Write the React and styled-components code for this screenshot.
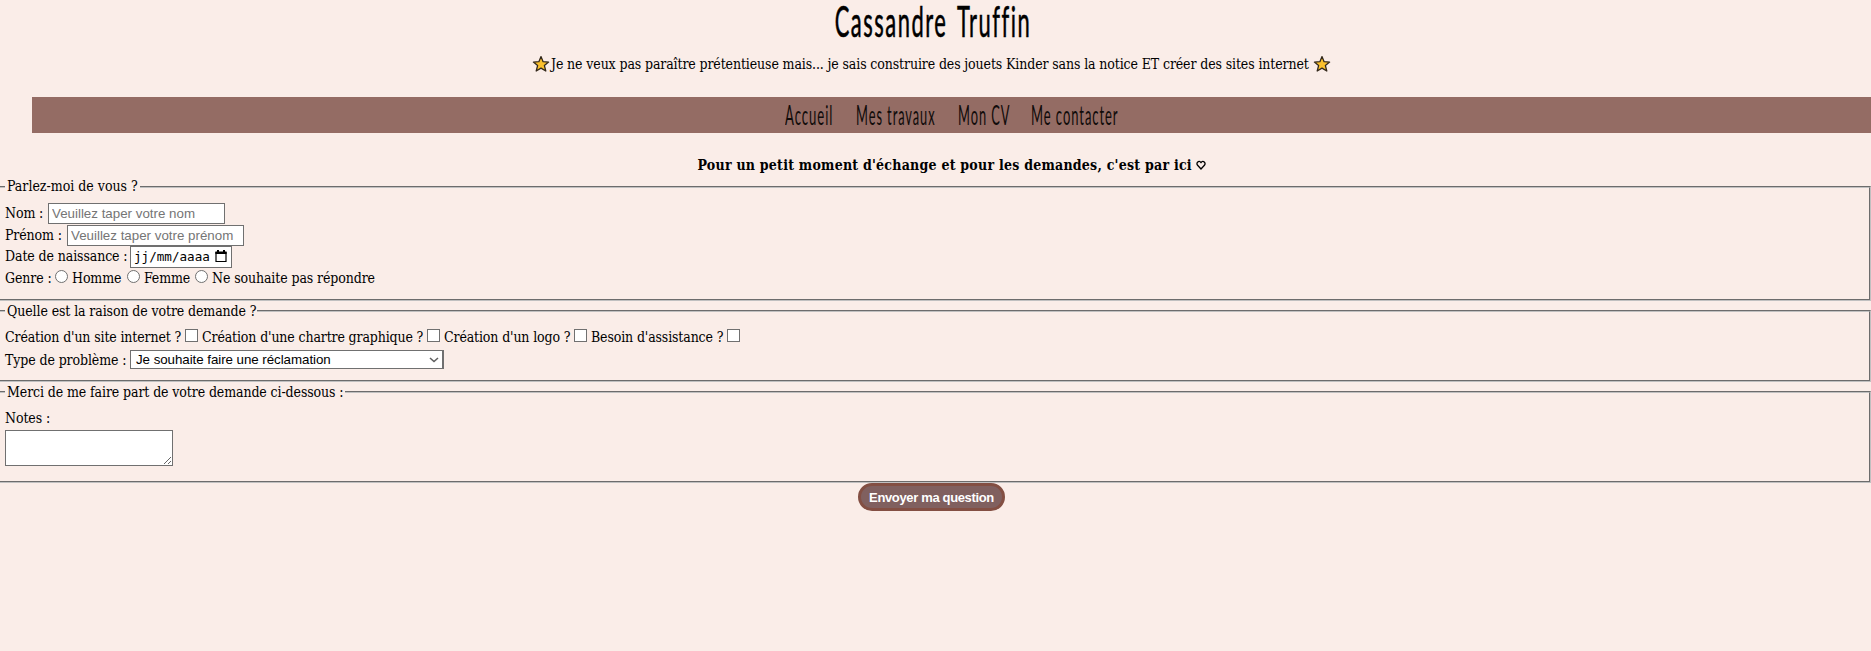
import React from "react";
import styled, { createGlobalStyle } from "styled-components";

const Global = createGlobalStyle`
  *, *::before, *::after { box-sizing: border-box; }
  body {
    margin: 0;
    background: #faede8;
    color: #000;
    font: 14px/20px "DejaVu Serif Condensed", "DejaVu Serif", Georgia, serif;
    font-stretch: condensed;
  }
`;

const Page = styled.div`
  display: flex;
  flex-direction: column;
`;

const Title = styled.h1`
  margin: 0;
  height: 50px;
  display: flex;
  justify-content: center;
  font: 400 43px/42px Lato, sans-serif;
  font-variant-ligatures: none;
  letter-spacing: 3px;
  word-spacing: 6px;
  padding-right: 5px;
  span { display: block; width: 440px; margin: 0 -100px; text-align: center; white-space: nowrap; transform: scaleX(0.51); -webkit-text-stroke: 0.6px #000; }
`;

const Tagline = styled.p`
  margin: 0;
  height: 47px;
  padding: 4px 8px 0 0;
  display: flex;
  justify-content: center;
  gap: 1px;
`;

const Text = styled.span`
  display: block;
  flex: none;
  width: ${(p) => p.$w}px;
  letter-spacing: ${(p) => p.$track ?? -0.11}px;
  white-space: nowrap;
`;

const Star = styled.svg`
  width: 18px;
  height: 18px;
  margin: 1px 0 0 ${(p) => p.$gap || 0}px;
`;

const Nav = styled.nav`
  margin-left: 32px;
  height: 36px;
  background: #946c64;
  display: flex;
  padding-left: 753px;
  gap: 23px;
`;

const NavLink = styled.a`
  display: block;
  width: ${(p) => p.$w}px;
  font: 400 27px/35px Lato, sans-serif;
  letter-spacing: 2px;
  white-space: nowrap;
  color: #100b0a;
  span { display: inline-block; transform: scaleX(${(p) => p.$scale}); transform-origin: 0 50%; }
`;

const Intro = styled.p`
  margin: 22px 0 0 32px;
  height: 21px;
  display: flex;
  justify-content: center;
  font-weight: 700;
  gap: 4px;
`;

const Heart = styled.svg`
  width: 10px;
  height: 10px;
  margin-top: 5px;
`;

const Group = styled.fieldset`
  margin: 0;
  border: 2px groove #c0c0c0;
  border-left: 0;
  padding: 0 0 0 5px;
  height: ${(p) => p.$h}px;
  min-width: 0;
`;

const Legend = styled.legend`
  padding: 0 0 0 2px;
  height: ${(p) => p.$h || 20}px;
`;

const Rows = styled.div`
  padding-top: ${(p) => p.$top || 0}px;
`;

const Row = styled.div`
  display: flex;
  align-items: flex-start;
  height: ${(p) => p.$h}px;
`;

const Field = styled.input`
  width: 177px;
  height: 21px;
  border: 1px solid #707070;
  border-radius: 0;
  background: #fff;
  padding: 0 3px;
  font: 13.33px "Liberation Sans", Arial, sans-serif;
  outline: none;
  &::placeholder { color: #757575; opacity: 1; }
`;

const DateField = styled.div`
  width: 102px;
  height: 22px;
  border: 1px solid #707070;
  background: #fff;
  display: flex;
  justify-content: space-between;
  padding: 0 4px 0 3px;
  font: 12.6px/20px "DejaVu Sans Mono", monospace;
  svg { width: 12px; height: 13px; margin-top: 3px; }
`;

const Choice = styled.input`
  appearance: none;
  flex: none;
  width: 13px;
  height: 13px;
  margin: ${(p) => p.$top}px 4px 0 4px;
  border: 1px solid #707070;
  border-radius: ${(p) => (p.type === "radio" ? "50%" : "0")};
  background: #fff;
`;

const Select = styled.div`
  width: 314px;
  height: 19px;
  border: 1px solid #707070;
  border-right-width: 2px;
  background: #fff;
  display: flex;
  justify-content: space-between;
  padding: 0 3px 0 5px;
  font: 13.33px/17px "Liberation Sans", Arial, sans-serif;
  letter-spacing: -0.05px;
  svg { width: 10px; height: 6px; margin-top: 6px; }
`;

const Notes = styled.textarea`
  display: block;
  width: 168px;
  height: 36px;
  border: 1px solid #707070;
  border-radius: 0;
  background: #fff;
  resize: both;
`;

const Submit = styled.button`
  align-self: center;
  margin-right: 8px;
  width: 147px;
  height: 28px;
  padding: 1px 0 0;
  border: 3px solid #834f43;
  border-radius: 14px;
  background: #80605f;
  color: #fff;
  font: 700 13px/20px "Liberation Sans", Arial, sans-serif;
  letter-spacing: -0.35px;
  white-space: nowrap;
`;

const StarIcon = ({ gap }) => (
  <Star $gap={gap} viewBox="0 0 18 18">
    <path d="M9 1.6 11.1 6.7 16.6 7.1 12.4 10.6 13.8 16 9 13.1 4.2 16 5.6 10.6 1.4 7.1 6.9 6.7Z" fill="#fbc02d" stroke="#33291c" strokeWidth="1.3" strokeLinejoin="round" />
  </Star>
);

const links = [
  ["Accueil", 48, 0.485],
  ["Mes travaux", 79, 0.475],
  ["Mon CV", 50, 0.475],
  ["Me contacter", 88, 0.48],
];

export default function App() {
  return (
    <Page>
      <Global />
      <Title><span>Cassandre Truffin</span></Title>
      <Tagline>
        <StarIcon />
        <Text $w={757} $track={-0.125}>Je ne veux pas paraître prétentieuse mais... je sais construire des jouets Kinder sans la notice ET créer des sites internet</Text>
        <StarIcon gap={4} />
      </Tagline>
      <Nav>
        {links.map(([label, w, s]) => (
          <NavLink key={label} $w={w} $scale={s}><span>{label}</span></NavLink>
        ))}
      </Nav>
      <Intro>
        <Text $w={494} $track={0.24}>Pour un petit moment d'échange et pour les demandes, c'est par ici</Text>
        <Heart viewBox="0 0 10 10"><path d="M5 9 1.6 5.3C-.2 3 2.8-.4 5 2.5 7.2-.4 10.2 3 8.4 5.3Z" fill="none" stroke="#000" strokeWidth="1.3" /></Heart>
      </Intro>
      <Group $h={125}>
        <Legend $h={22}><Text $w={133} $track={0}>Parlez-moi de vous ?</Text></Legend>
        <Rows $top={5}>
          <Row $h={22}><Text $w={43}>Nom :</Text><Field placeholder="Veuillez taper votre nom" /></Row>
          <Row $h={21}><Text $w={62}>Prénom :</Text><Field placeholder="Veuillez taper votre prénom" /></Row>
          <Row $h={22}>
            <Text $w={125}>Date de naissance :</Text>
            <DateField>
              jj/mm/aaaa
              <svg viewBox="0 0 12 13"><path d="M1 2.5h10v9H1z" fill="none" stroke="#000" strokeWidth="1.2" /><path d="M.4 1.5h11.2V4H.4zM2 0h2v2H2zM8 0h2v2H8z" /></svg>
            </DateField>
          </Row>
          <Row $h={22}>
            <Text $w={46}>Genre :</Text><Choice type="radio" $top={2} />
            <Text $w={51}>Homme</Text><Choice type="radio" $top={2} />
            <Text $w={47}>Femme</Text><Choice type="radio" $top={2} />
            <Text $w={163}>Ne souhaite pas répondre</Text>
          </Row>
        </Rows>
      </Group>
      <Group $h={81}>
        <Legend><Text $w={250}>Quelle est la raison de votre demande ?</Text></Legend>
        <Rows $top={6}>
          <Row $h={23}>
            <Text $w={176} $track={-0.14}>Création d'un site internet ?</Text><Choice type="checkbox" $top={2} />
            <Text $w={221} $track={-0.14}>Création d'une chartre graphique ?</Text><Choice type="checkbox" $top={2} />
            <Text $w={126} $track={-0.14}>Création d'un logo ?</Text><Choice type="checkbox" $top={2} />
            <Text $w={132} $track={-0.14}>Besoin d'assistance ?</Text><Choice type="checkbox" $top={2} />
          </Row>
          <Row $h={22}>
            <Text $w={125}>Type de problème :</Text>
            <Select>
              Je souhaite faire une réclamation
              <svg viewBox="0 0 10 6"><path d="m1 1 4 3.5L9 1" fill="none" stroke="#606060" strokeWidth="1.6" /></svg>
            </Select>
          </Row>
        </Rows>
      </Group>
      <Group $h={101}>
        <Legend><Text $w={338}>Merci de me faire part de votre demande ci-dessous :</Text></Legend>
        <Rows $top={6}>
          <Row $h={22}><Text $w={60}>Notes :</Text></Row>
          <Notes />
        </Rows>
      </Group>
      <Submit>Envoyer ma question</Submit>
    </Page>
  );
}
